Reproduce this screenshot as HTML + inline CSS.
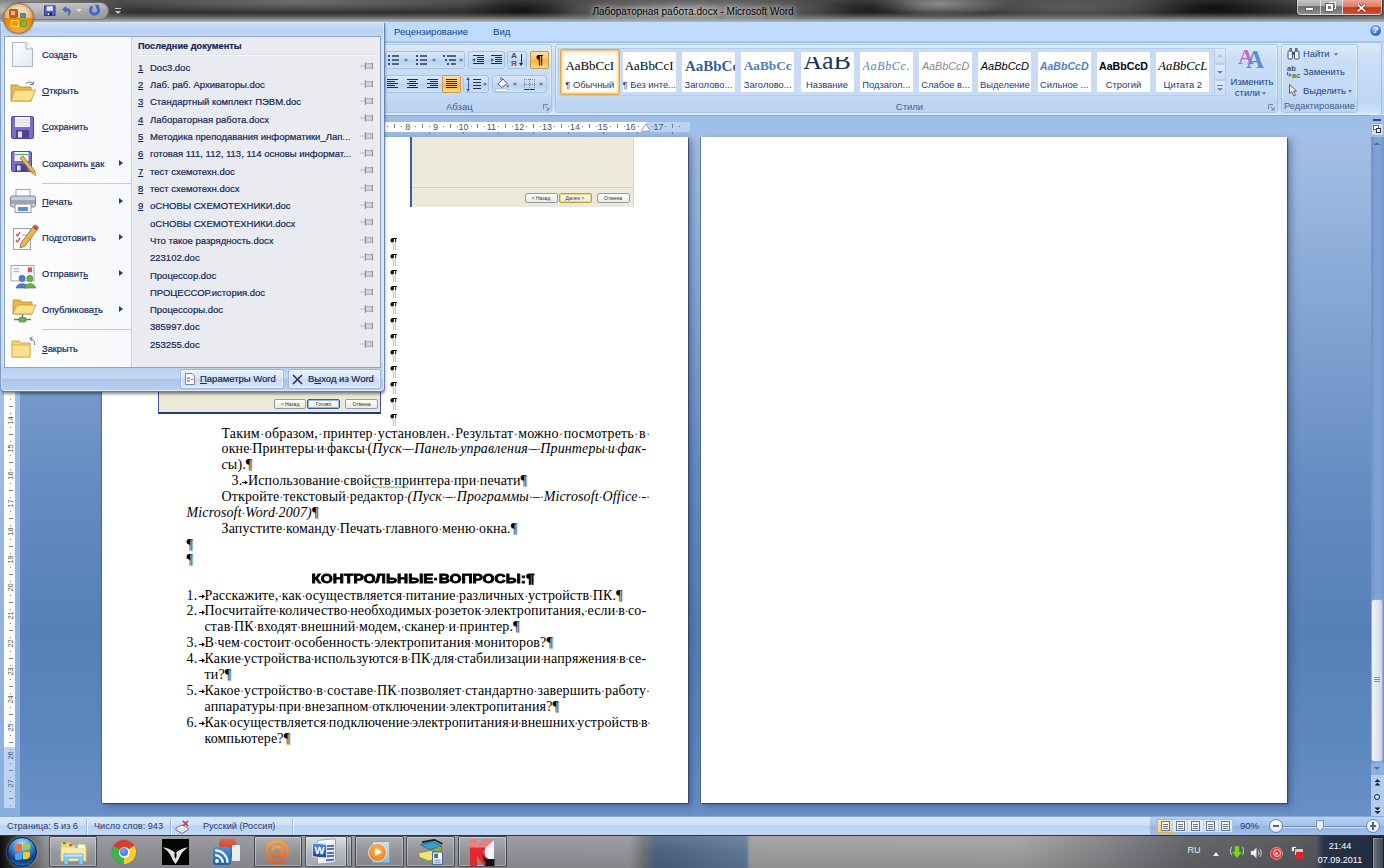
<!DOCTYPE html>
<html lang="ru"><head><meta charset="utf-8"><title>Лабораторная работа.docx - Microsoft Word</title>
<style>
html,body{margin:0;padding:0}
body{width:1384px;height:868px;overflow:hidden;position:relative;background:#7fa3d3;
 font-family:"Liberation Sans",sans-serif;font-size:11px;color:#15428b}
.abs,#root *{position:absolute;box-sizing:border-box}
#root{position:absolute;left:0;top:0;width:1384px;height:868px;overflow:hidden}
.t{white-space:nowrap;line-height:14px;height:14px}
.ui{font-family:"Liberation Sans",sans-serif;font-size:9.5px;color:#15428b}
#root u{position:static;text-decoration:underline}
#root span.s,#root i,#root b{position:static}
/* title bar */
#title{left:0;top:0;width:1384px;height:22px;background:
 linear-gradient(rgba(0,0,0,0) 0,rgba(0,0,0,0) 58%,rgba(150,150,150,.55) 80%,rgba(176,176,176,.95) 96%,rgba(180,180,180,1) 100%),
 radial-gradient(ellipse 120px 22px at 10px 10px,rgba(200,200,200,.95),rgba(150,150,150,.5) 60%,rgba(120,120,120,0) 100%),
 radial-gradient(ellipse 210px 11px at 300px 2px,rgba(135,135,135,.6),rgba(100,100,100,0) 100%),
 radial-gradient(ellipse 60px 16px at 520px 10px,rgba(10,10,10,.75),rgba(20,20,20,0) 100%),
 radial-gradient(ellipse 160px 19px at 693px 12px,rgba(185,185,185,.8),rgba(150,150,150,.4) 55%,rgba(120,120,120,0) 100%),
 radial-gradient(ellipse 50px 14px at 868px 9px,rgba(10,10,10,.5),rgba(20,20,20,0) 100%),
 radial-gradient(ellipse 70px 13px at 940px 4px,rgba(165,165,165,.75),rgba(120,120,120,0) 100%),
 radial-gradient(ellipse 120px 15px at 1070px 8px,rgba(120,120,120,.55),rgba(90,90,90,0) 100%),
 radial-gradient(ellipse 85px 17px at 1215px 8px,rgba(5,5,5,.8),rgba(20,20,20,0) 100%),
 radial-gradient(ellipse 60px 20px at 1384px 10px,rgba(130,130,130,.6),rgba(90,90,90,0) 100%),
 linear-gradient(#474747,#383838 40%,#2c2c2c 68%,#3a3a3a)}
#tabs{left:0;top:22px;width:1384px;height:19px;background:#bfdbff}
#ribbon{left:0;top:40.5px;width:1384px;height:74.5px;background:linear-gradient(#c3dbfa,#c9dff9 30%,#c0d8f8 75%,#bcd5f7)}
#belowrib{left:0;top:115px;width:1384px;height:22px;background:linear-gradient(#9dbde8,#a3c0e8)}
#docbg{left:0;top:137px;width:1384px;height:680px;background:linear-gradient(#a3bfe5 0%,#84a6d4 25%,#678dc2 50%,#5680b8 73%,#5e87bf 88%,#6990c7 100%)}
.page{background:#fff;box-shadow:-1px 0 0 rgba(60,85,130,.6),1px 1px 1px rgba(40,55,95,.7),4px 3px 7px rgba(45,65,110,.5)}
#status{left:0;top:816px;width:1384px;height:19px;background:linear-gradient(#d9e8fb,#cfe0f8 42%,#bbd2f2 50%,#c2d8f5 100%);border-top:1px solid #86a9da}


.grp{border:1px solid #a9c4e6;border-radius:3px;background:linear-gradient(#dbe8f8 0%,#cadef6 22%,#c3daf6 78%,#c3daf6 100%);box-shadow:inset 0 0 0 1px rgba(255,255,255,.45)}
.grplbl{left:0;right:0;bottom:0;height:14px;background:linear-gradient(#c0d7f3,#bbd3f1);border-radius:0 0 3px 3px;color:#41608f;text-align:center;line-height:17px;font-size:9.5px;overflow:hidden}
.btnset{border:1px solid #a7c2e4;border-radius:3px;background:linear-gradient(#d9e6f7,#c4d9f3 50%,#b9d1f0 51%,#cfe0f6);}
.btnhot{background:linear-gradient(#fde0a8,#fcc36b 45%,#fbb040 50%,#fdd98d);border:1px solid #c99a4c;border-radius:2px}
.sty{background:#fff;width:53px;height:40px;top:52px}
.stys{font-family:"Liberation Serif",serif;font-size:15px;line-height:18px;top:5px;left:0;width:53px;text-align:center;color:#000;white-space:nowrap;overflow:hidden;height:20px}
.styl{font-size:9.4px;line-height:13px;top:26px;left:0;width:53px;text-align:center;color:#1e3a78;white-space:nowrap;overflow:hidden}
.rul{font-size:9px;color:#46536f;line-height:11px;height:11px;text-align:center;width:14px}
.sb{color:#1f3b73;font-size:9.15px;line-height:14px;white-space:nowrap}


.dl{display:flex;justify-content:space-between;font-family:"Liberation Serif",serif;font-size:14px;line-height:16px;height:16px;color:#000;white-space:nowrap;letter-spacing:.14px}
.dl.nj{justify-content:flex-start}
#root .dl span{position:static;display:block;flex:0 0 auto}
#root .dl span.i{font-style:italic}
#root .dl span.d{color:#333;font-size:12px;width:3.5px;flex:0 1 3.5px;min-width:0;display:flex;justify-content:center;overflow:visible}
#root .dl span.nt{display:flex;justify-content:space-between;align-items:baseline}
#root .dl span.ar{font-size:9px;font-weight:bold;line-height:16px;letter-spacing:-1px;transform:translateY(-1px)}
#root .dl span.pm{text-shadow:1px 1px 0 #b8b8b8}
#root .dl span.tab{font-size:8px;width:0;overflow:visible;position:relative}
.pil{font-family:"Liberation Sans",sans-serif;font-weight:bold;font-size:15.4px;line-height:16px;height:18px;width:10px;color:transparent;background:linear-gradient(#0a0a0a 0,#0a0a0a 6.6px,#b9bdc3 7.6px,#b9bdc3 100%);-webkit-background-clip:text;background-clip:text;transform:scaleX(.86);transform-origin:0 0}
.xpbtn{border:1px solid #8c9bb8;border-radius:2px;background:linear-gradient(#fff,#ece9d8);font-size:5px;line-height:6px;color:#333;text-align:center;white-space:nowrap;overflow:hidden}


#menu{left:1px;top:22px;width:382.5px;height:369px;border:1px solid #dfeafa;border-left-color:#c5d9f3;border-top:none;border-radius:0 0 4px 4px;
 background:linear-gradient(#d3e3f8 0px,#c2d7f3 5px,#b8cfef 8px,#c4d9f5 14px,#cfe0f7 20px,#cfe0f7 340px,#c3d8f4 344px,#b9d0f0 346px,#c5daf5 356px,#a9c5ea 357px,#b8d0f0 368px);
 box-shadow:1px 1px 0 0 rgba(95,125,175,.8),-1px 1px 0 0 rgba(95,125,175,.5),1px 3px 3px 0 rgba(0,0,0,.45)}
.mi{font-size:9.3px;color:#15285a;-webkit-text-stroke:.2px #15285a;line-height:14px;height:14px;white-space:nowrap}
.md{font-size:9.5px;color:#15285a;-webkit-text-stroke:.2px #15285a;line-height:14px;height:14px;white-space:nowrap}
.marr{width:0;height:0;border-top:3.5px solid transparent;border-bottom:3.5px solid transparent;border-left:4px solid #2b3f63}
.mbtn{border:1px solid #9ab6dc;border-radius:3px;background:linear-gradient(#e9f1fc,#d5e4f8 50%,#c6daf5 51%,#d9e7fa);height:20px;box-shadow:inset 0 0 0 1px rgba(255,255,255,.7)}


#taskbar{left:0;top:835px;width:1384px;height:33px;background:
 linear-gradient(90deg,rgba(0,0,0,.9) 0px,rgba(10,10,10,.75) 10px,rgba(40,40,40,0) 46px),
 linear-gradient(90deg,rgba(45,47,52,0) 0px,rgba(45,47,52,0) 1020px,rgba(45,47,52,.22) 1100px,rgba(45,47,52,.5) 1185px,rgba(42,44,50,.6) 1316px,rgba(30,42,64,.92) 1324px,rgba(27,37,57,.94) 1384px),
 linear-gradient(rgba(255,255,255,.12),rgba(255,255,255,0) 50%,rgba(0,0,0,.08)),
 linear-gradient(90deg,#808285 0px,#8c8e91 60px,#909296 630px,#6a7078 644px,#4b5f7e 656px,#5e7795 746px,#9a9b9d 750px,#9c9d9f 1000px,#8f9092 1384px);
 border-top:1px solid #30343a}
.tbtn{top:0px;height:31px;border:1px solid rgba(50,55,62,.8);border-radius:2px;background:linear-gradient(rgba(190,192,196,.5),rgba(150,153,158,.3) 50%,rgba(125,128,133,.35));box-shadow:inset 0 0 0 1px rgba(235,237,240,.4)}
.tray{color:#fff;font-size:10px;line-height:12px;height:12px;white-space:nowrap;text-align:center}
</style></head>
<body><div id="root">
<div id="title">
<div style="left:18px;top:2px;width:91px;height:18px;border-radius:0 9px 9px 0;background:linear-gradient(rgba(215,215,215,.8),rgba(165,165,165,.75));border:1px solid rgba(90,90,90,.7)"></div>
<svg style="left:44px;top:5px" width="11.5" height="11.5" viewBox="0 0 13 12"><rect x="0.5" y="0.5" width="12" height="11" fill="#5d5fc4" stroke="#34389a"/><rect x="3" y="1" width="7" height="5" fill="#e8ecff"/><rect x="3" y="8" width="6" height="3.5" fill="#1c1f5a"/><rect x="4" y="8.6" width="2" height="2.4" fill="#dfe3ff"/></svg>
<svg style="left:61px;top:5px" width="12" height="12" viewBox="0 0 12 12"><path d="M1.5 4.5 L5 1.5 L5 3.5 C9 3 10.5 6 8.5 9.5 L7 10.5 C8.5 7.5 8 5.8 5 5.8 L5 7.5 Z" fill="#3f6fd0" stroke="#2853ad" stroke-width=".5"/></svg>
<div style="left:76px;top:9px;width:0;height:0;border-left:3px solid transparent;border-right:3px solid transparent;border-top:3px solid #dfe3ec"></div>
<svg style="left:88px;top:4px" width="13" height="13" viewBox="0 0 13 13"><path d="M9.3 3 A4.1 4.1 0 1 1 3.6 3.2" fill="none" stroke="#3a68cc" stroke-width="2.8" stroke-linecap="round"/><path d="M7 0.3 L11.4 1.4 L8.8 5.2 Z" fill="#3a68cc"/></svg>
<div style="left:115px;top:8px;width:6px;height:1px;background:#b9c3d8"></div><div style="left:115px;top:11px;width:0;height:0;border-left:3px solid transparent;border-right:3px solid transparent;border-top:3px solid #b9c3d8"></div>
<div class="t" style="left:493px;top:4.5px;width:400px;text-align:center;color:#000;font-size:10px;text-shadow:0 0 5px rgba(255,255,255,.9),0 0 8px rgba(255,255,255,.7)">Лабораторная работа.docx - Microsoft Word</div>
<div style="left:1297px;top:-3px;width:85px;height:18px;border-radius:0 0 4px 4px;border:1px solid rgba(225,225,225,.7);background:linear-gradient(#d0d0d0,#a8a8a8 50%,#6e6e6e 54%,#8a8a8a);overflow:hidden;box-shadow:0 0 0 1px rgba(40,40,40,.6)"><div style="left:22px;top:0;width:1px;height:18px;background:rgba(235,235,235,.75)"></div><div style="left:44px;top:0;width:1px;height:18px;background:rgba(235,235,235,.75)"></div><div style="left:45px;top:0;width:39px;height:18px;background:linear-gradient(#f0b4a6,#e07a64 48%,#c8351a 54%,#d8563a)"></div><div style="left:7px;top:9px;width:9px;height:4px;background:#fff;border:1px solid #666"></div><div style="left:31px;top:4px;width:7px;height:7px;border:1.5px solid #eee;background:rgba(120,120,120,.6)"></div><div style="left:28px;top:6px;width:7px;height:7px;border:2px solid #fff;background:#777;outline:1px solid #666"></div><svg style="left:59px;top:6px" width="9" height="8" viewBox="0 0 11 10"><path d="M1.5 1.5 L9.5 8.5 M9.5 1.5 L1.5 8.5" stroke="#6a1a10" stroke-width="3.6" stroke-linecap="square"/><path d="M1.5 1.5 L9.5 8.5 M9.5 1.5 L1.5 8.5" stroke="#fff" stroke-width="2.2" stroke-linecap="square"/></svg></div>
</div>
<div id="tabs">
<div class="t ui" style="left:394px;top:3px;font-size:9.6px">Рецензирование</div>
<div class="t ui" style="left:493px;top:3px;font-size:9.6px">Вид</div>
<div style="left:1369px;top:2px;width:13px;height:13px;border-radius:7px;background:radial-gradient(circle at 40% 30%,#9cc4ff,#2a63c9 70%);border:1px solid #dbe9ff;color:#fff;font-size:9px;font-weight:bold;font-style:italic;line-height:11px;text-align:center">?</div>
</div>
<div id="ribbon">
<div style="left:0;top:0;width:1384px;height:1px;background:#a9c6ee"></div>
<div style="left:2px;top:1px;width:1380px;height:73px;border:1px solid #9ebfe8;border-radius:3px;background:linear-gradient(#dce9f9,#cadef7 22%,#bed7f7 80%,#c9e0fa 96%,#d8ecfc 100%)"></div>
</div>
<div class="grp" style="left:300px;top:44px;width:252px;height:69px"><div class="grplbl"><span class="s" style="position:absolute;left:145px">Абзац</span></div><svg style="left:242px;top:59px" width="7" height="7" viewBox="0 0 7 7"><path d="M0.5 5 V0.5 H5" fill="none" stroke="#6d87ad"/><path d="M2.5 2.5 L6 6 M6 3.5 V6 H3.5" fill="none" stroke="#6d87ad"/></svg></div>
<div class="btnset" style="left:384.5px;top:51px;width:80.5px;height:18px"></div>
<div class="btnset" style="left:468px;top:51px;width:37px;height:18px"></div>
<div class="btnset" style="left:507px;top:51px;width:20px;height:18px"></div>
<div class="btnhot" style="left:530px;top:51px;width:19px;height:18px"></div>
<div class="t" style="left:530px;top:52px;width:19px;text-align:center;font-size:13px;font-weight:bold;color:#000;line-height:16px">¶</div>
<div class="btnset" style="left:384.5px;top:75px;width:76.5px;height:18px"></div>
<div class="btnhot" style="left:442px;top:75px;width:19px;height:18px"></div>
<div class="btnset" style="left:463px;top:75px;width:26px;height:18px"></div>
<div class="btnset" style="left:492px;top:75px;width:55px;height:18px"></div>
<div style="left:388px;top:55px;width:2px;height:2px;background:#2d4f8e"></div>
<div style="left:392px;top:55px;width:7px;height:2px;background:#55637d"></div>
<div style="left:388px;top:59px;width:2px;height:2px;background:#2d4f8e"></div>
<div style="left:392px;top:59px;width:7px;height:2px;background:#55637d"></div>
<div style="left:388px;top:63px;width:2px;height:2px;background:#2d4f8e"></div>
<div style="left:392px;top:63px;width:7px;height:2px;background:#55637d"></div>
<div style="left:404px;top:59px;width:0;height:0;border-left:2px solid transparent;border-right:2px solid transparent;border-top:3px solid #6b7c9a"></div>
<div style="left:416px;top:55px;width:2px;height:2px;background:#2d4f8e"></div>
<div style="left:420px;top:55px;width:7px;height:2px;background:#55637d"></div>
<div style="left:416px;top:59px;width:2px;height:2px;background:#2d4f8e"></div>
<div style="left:420px;top:59px;width:7px;height:2px;background:#55637d"></div>
<div style="left:416px;top:63px;width:2px;height:2px;background:#2d4f8e"></div>
<div style="left:420px;top:63px;width:7px;height:2px;background:#55637d"></div>
<div style="left:432px;top:59px;width:0;height:0;border-left:2px solid transparent;border-right:2px solid transparent;border-top:3px solid #6b7c9a"></div>
<div style="left:443px;top:55px;width:2px;height:2px;background:#2d4f8e"></div>
<div style="left:447px;top:55px;width:9px;height:2px;background:#55637d"></div>
<div style="left:445px;top:59px;width:2px;height:2px;background:#2d4f8e"></div>
<div style="left:449px;top:59px;width:7px;height:2px;background:#55637d"></div>
<div style="left:447px;top:63px;width:2px;height:2px;background:#2d4f8e"></div>
<div style="left:451px;top:63px;width:5px;height:2px;background:#55637d"></div>
<div style="left:459px;top:59px;width:0;height:0;border-left:2px solid transparent;border-right:2px solid transparent;border-top:3px solid #6b7c9a"></div>
<div style="left:473px;top:55px;width:11px;height:1px;background:#1f2d45"></div>
<div style="left:477px;top:57px;width:7px;height:1px;background:#1f2d45"></div>
<div style="left:477px;top:59px;width:7px;height:1px;background:#1f2d45"></div>
<div style="left:477px;top:61px;width:7px;height:1px;background:#1f2d45"></div>
<div style="left:473px;top:63px;width:11px;height:1px;background:#1f2d45"></div>
<div style="left:491px;top:55px;width:11px;height:1px;background:#1f2d45"></div>
<div style="left:495px;top:57px;width:7px;height:1px;background:#1f2d45"></div>
<div style="left:495px;top:59px;width:7px;height:1px;background:#1f2d45"></div>
<div style="left:495px;top:61px;width:7px;height:1px;background:#1f2d45"></div>
<div style="left:491px;top:63px;width:11px;height:1px;background:#1f2d45"></div>
<div style="left:472px;top:58px;width:0;height:0;border-top:2px solid transparent;border-bottom:2px solid transparent;border-right:3px solid #2f62c8"></div>
<div style="left:491px;top:58px;width:0;height:0;border-top:2px solid transparent;border-bottom:2px solid transparent;border-left:3px solid #2f62c8"></div>
<div class="t" style="left:511px;top:52px;font-size:8px;line-height:8px;height:8px;font-weight:bold;color:#2d4f8e">А</div>
<div class="t" style="left:511px;top:60px;font-size:8px;line-height:8px;height:8px;font-weight:bold;color:#b23a3a">Я</div>
<div style="left:521px;top:54px;width:1px;height:10px;background:#1f2d45"></div><div style="left:519px;top:63px;width:0;height:0;border-left:2.5px solid transparent;border-right:2.5px solid transparent;border-top:3px solid #1f2d45"></div>
<div style="left:387px;top:79px;width:11px;height:1px;background:#1f2d45"></div><div style="left:387px;top:81px;width:8px;height:1px;background:#1f2d45"></div><div style="left:387px;top:83px;width:11px;height:1px;background:#1f2d45"></div><div style="left:387px;top:85px;width:8px;height:1px;background:#1f2d45"></div><div style="left:387px;top:87px;width:11px;height:1px;background:#1f2d45"></div>
<div style="left:407px;top:79px;width:11px;height:1px;background:#1f2d45"></div><div style="left:409px;top:81px;width:7px;height:1px;background:#1f2d45"></div><div style="left:407px;top:83px;width:11px;height:1px;background:#1f2d45"></div><div style="left:409px;top:85px;width:7px;height:1px;background:#1f2d45"></div><div style="left:407px;top:87px;width:11px;height:1px;background:#1f2d45"></div>
<div style="left:427px;top:79px;width:11px;height:1px;background:#1f2d45"></div><div style="left:430px;top:81px;width:8px;height:1px;background:#1f2d45"></div><div style="left:427px;top:83px;width:11px;height:1px;background:#1f2d45"></div><div style="left:430px;top:85px;width:8px;height:1px;background:#1f2d45"></div><div style="left:427px;top:87px;width:11px;height:1px;background:#1f2d45"></div>
<div style="left:446px;top:79px;width:11px;height:1px;background:#1f2d45"></div><div style="left:446px;top:81px;width:11px;height:1px;background:#1f2d45"></div><div style="left:446px;top:83px;width:11px;height:1px;background:#1f2d45"></div><div style="left:446px;top:85px;width:11px;height:1px;background:#1f2d45"></div><div style="left:446px;top:87px;width:11px;height:1px;background:#1f2d45"></div>
<div style="left:468px;top:78px;width:1px;height:12px;background:#2f62c8"></div><div style="left:466px;top:77px;width:0;height:0;border-left:2.5px solid transparent;border-right:2.5px solid transparent;border-bottom:3px solid #2f62c8"></div><div style="left:466px;top:89px;width:0;height:0;border-left:2.5px solid transparent;border-right:2.5px solid transparent;border-top:3px solid #2f62c8"></div>
<div style="left:473px;top:79px;width:8px;height:1px;background:#1f2d45"></div>
<div style="left:473px;top:82px;width:8px;height:1px;background:#1f2d45"></div>
<div style="left:473px;top:85px;width:8px;height:1px;background:#1f2d45"></div>
<div style="left:473px;top:88px;width:8px;height:1px;background:#1f2d45"></div>
<div style="left:483px;top:83px;width:0;height:0;border-left:2px solid transparent;border-right:2px solid transparent;border-top:3px solid #6b7c9a"></div>
<svg style="left:495px;top:77px" width="16" height="15" viewBox="0 0 16 15"><path d="M3 7 L8 2 L12 6.5 L7 10.5 Z" fill="#f4f6fb" stroke="#59647c"/><path d="M8 2 C6 -0.5 4.5 1 6.5 3.5" fill="none" stroke="#59647c"/><path d="M12.5 7 C14 9 14 10.5 12.8 10.5 C11.6 10.5 11.6 9 12.5 7Z" fill="#3e78d6"/><rect x="0.5" y="12" width="12" height="2.5" fill="#fff" stroke="#9aa8bf" stroke-width=".6"/></svg>
<div style="left:513px;top:83px;width:0;height:0;border-left:2px solid transparent;border-right:2px solid transparent;border-top:3px solid #6b7c9a"></div>
<div style="left:524px;top:79px;width:11px;height:11px;border:1px dotted #7d8aa3;border-bottom:1px solid #1f2d45"></div><div style="left:529px;top:79px;width:1px;height:11px;border-left:1px dotted #7d8aa3"></div><div style="left:524px;top:84px;width:11px;height:1px;border-top:1px dotted #7d8aa3"></div>
<div style="left:539px;top:83px;width:0;height:0;border-left:2px solid transparent;border-right:2px solid transparent;border-top:3px solid #6b7c9a"></div>
<div class="grp" style="left:555px;top:44px;width:723px;height:69px"><div class="grplbl" style="padding-right:14px">Стили</div><svg style="left:712px;top:59px" width="7" height="7" viewBox="0 0 7 7"><path d="M0.5 5 V0.5 H5" fill="none" stroke="#6d87ad"/><path d="M2.5 2.5 L6 6 M6 3.5 V6 H3.5" fill="none" stroke="#6d87ad"/></svg></div>
<div style="left:558px;top:48px;width:668px;height:48px;border:1px solid #b5cdeb;background:#c8dcf5"></div>
<div style="left:560px;top:49px;width:60px;height:46px;border:1px solid #e0a84a;border-radius:2px;background:#fff;box-shadow:inset 0 0 4px 1px #fbcf7f, inset 0 0 1px 1px #f6b85a"></div>
<div class="sty" style="left:563.3px;background:transparent;"><div class="stys" style="font-size:12.9px;">AaBbCcI</div><div class="styl">¶ Обычный</div></div>
<div class="sty" style="left:622.6px;"><div class="stys" style="font-size:12.9px;">AaBbCcI</div><div class="styl">¶ Без инте...</div></div>
<div class="sty" style="left:681.9px;"><div class="stys" style="font-size:15px;font-weight:bold;color:#365f91;text-align:left;padding-left:3px;">AaBbCc</div><div class="styl">Заголово...</div></div>
<div class="sty" style="left:741.2px;"><div class="stys" style="font-size:13.3px;font-weight:bold;color:#4f81bd;">AaBbCc</div><div class="styl">Заголово...</div></div>
<div class="sty" style="left:800.5px;"><div class="stys" style="font-size:26px;color:#17365d;line-height:8px;">AaB</div><div class="styl">Название</div></div>
<div class="sty" style="left:859.8px;"><div class="stys" style="font-size:12px;font-style:italic;color:#4f81bd;letter-spacing:.64px;">AaBbCc.</div><div class="styl">Подзагол...</div></div>
<div class="sty" style="left:919.1px;"><div class="stys" style="font-size:10.8px;font-style:italic;color:#8a8a8a;font-family:'Liberation Sans',sans-serif;">AaBbCcD</div><div class="styl">Слабое в...</div></div>
<div class="sty" style="left:978.4px;"><div class="stys" style="font-size:11px;font-style:italic;color:#000;font-family:'Liberation Sans',sans-serif;">AaBbCcD</div><div class="styl">Выделение</div></div>
<div class="sty" style="left:1037.7px;"><div class="stys" style="font-size:10.6px;font-style:italic;font-weight:bold;color:#4f81bd;font-family:'Liberation Sans',sans-serif;">AaBbCcD</div><div class="styl">Сильное ...</div></div>
<div class="sty" style="left:1097.0px;"><div class="stys" style="font-size:10.6px;font-weight:bold;color:#000;font-family:'Liberation Sans',sans-serif;">AaBbCcD</div><div class="styl">Строгий</div></div>
<div class="sty" style="left:1156.3px;"><div class="stys" style="font-size:12.6px;font-style:italic;color:#000;">AaBbCcL</div><div class="styl">Цитата 2</div></div>
<div style="left:1214px;top:48px;width:12px;height:16px;border:1px solid #b5cdeb;background:linear-gradient(#dfeaf8,#cadcf3)"></div>
<div style="left:1214px;top:64px;width:12px;height:16px;border:1px solid #b5cdeb;background:linear-gradient(#dfeaf8,#cadcf3)"></div>
<div style="left:1214px;top:80px;width:12px;height:16px;border:1px solid #b5cdeb;background:linear-gradient(#dfeaf8,#cadcf3)"></div>
<div style="left:1217px;top:54px;width:0;height:0;border-left:3px solid transparent;border-right:3px solid transparent;border-bottom:3px solid #b9c6da"></div>
<div style="left:1217px;top:71px;width:0;height:0;border-left:3px solid transparent;border-right:3px solid transparent;border-top:3px solid #6d87ad"></div>
<div style="left:1217px;top:85px;width:6px;height:1px;background:#6d87ad"></div><div style="left:1217px;top:88px;width:0;height:0;border-left:3px solid transparent;border-right:3px solid transparent;border-top:3px solid #6d87ad"></div>
<div class="t" style="left:1238px;top:43px;font-family:'Liberation Serif',serif;font-size:22px;line-height:28px;height:28px;color:#c05fb4;font-weight:bold;opacity:.9">A</div>
<div class="t" style="left:1246px;top:46px;font-family:'Liberation Serif',serif;font-size:25px;line-height:28px;height:28px;color:#5b8fd6;font-weight:bold">A</div>
<div class="t ui" style="left:1226px;top:75px;width:52px;text-align:center;font-size:9.5px">Изменить</div>
<div class="t ui" style="left:1226px;top:86px;width:43px;text-align:center;font-size:9.5px">стили</div>
<div style="left:1262px;top:92px;width:0;height:0;border-left:2.5px solid transparent;border-right:2.5px solid transparent;border-top:3px solid #6b7c9a"></div>
<div class="grp" style="left:1281px;top:44px;width:77px;height:69px"><div class="grplbl" style="font-size:9.3px">Редактирование</div></div>
<div class="t ui" style="left:1303px;top:47px;font-size:9.3px">Найти</div>
<div style="left:1334px;top:53px;width:0;height:0;border-left:2.5px solid transparent;border-right:2.5px solid transparent;border-top:3px solid #6b7c9a"></div>
<div class="t ui" style="left:1303px;top:65px;font-size:9.3px">Заменить</div>
<div class="t ui" style="left:1303px;top:84px;font-size:9.3px">Выделить</div>
<div style="left:1348px;top:90px;width:0;height:0;border-left:2.5px solid transparent;border-right:2.5px solid transparent;border-top:3px solid #6b7c9a"></div>
<svg style="left:1287px;top:47px" width="13" height="13" viewBox="0 0 13 13"><rect x="1" y="4" width="4.5" height="8" rx="1" fill="#f3f5fa" stroke="#44506b"/><rect x="7.5" y="4" width="4.5" height="8" rx="1" fill="#f3f5fa" stroke="#44506b"/><rect x="2.5" y="1" width="2.5" height="3.5" fill="#5d6a88"/><rect x="8" y="1" width="2.5" height="3.5" fill="#5d6a88"/><rect x="5" y="5" width="3" height="3" fill="#44506b"/></svg>
<div class="t" style="left:1287px;top:64.5px;font-size:7.5px;line-height:8px;height:8px;color:#44506b;font-weight:bold">ab</div><div class="t" style="left:1292px;top:71.5px;font-size:7.5px;line-height:8px;height:8px;color:#2d8a2d;font-weight:bold">ac</div><svg style="left:1286.5px;top:72px" width="5" height="5" viewBox="0 0 5 5"><path d="M0.6 0 V3 H4 M2.6 1.4 L4.2 3 L2.6 4.6" fill="none" stroke="#44506b" stroke-width=".9"/></svg>
<svg style="left:1289px;top:84px" width="9" height="13" viewBox="0 0 9 13"><path d="M0.5 0.5 L0.5 9.5 L2.8 7.5 L4.8 12 L6.5 11.2 L4.6 7 L7.5 7 Z" fill="#fff" stroke="#44506b" stroke-width=".9"/></svg>
<div id="belowrib">
<div style="left:0;top:-1.5px;width:1384px;height:1.5px;background:#d6ecfb"></div>
<div style="left:0;top:0;width:1384px;height:1.2px;background:#86a6d2"></div>
</div>
<div style="left:101px;top:121.5px;width:589px;height:10.5px;background:#bcd3f1"></div>
<div style="left:185px;top:121.5px;width:461px;height:10.5px;background:#fff"></div>
<div style="left:101px;top:132px;width:590px;height:5px;background:#9dbbe6"></div>
<div class="rul" style="left:400.8px;top:121.5px">8</div>
<div class="rul" style="left:428.6px;top:121.5px">9</div>
<div class="rul" style="left:456.5px;top:121.5px">10</div>
<div class="rul" style="left:484.4px;top:121.5px">11</div>
<div class="rul" style="left:512.2px;top:121.5px">12</div>
<div class="rul" style="left:540.0px;top:121.5px">13</div>
<div class="rul" style="left:567.9px;top:121.5px">14</div>
<div class="rul" style="left:595.8px;top:121.5px">15</div>
<div class="rul" style="left:623.6px;top:121.5px">16</div>
<div class="rul" style="left:651.5px;top:121.5px">17</div>
<div style="left:386.9px;top:126px;width:1px;height:1px;background:#6b7f9f"></div>
<div style="left:393.9px;top:124px;width:1px;height:4px;background:#6b7f9f"></div>
<div style="left:400.8px;top:126px;width:1px;height:1px;background:#6b7f9f"></div>
<div style="left:414.8px;top:126px;width:1px;height:1px;background:#6b7f9f"></div>
<div style="left:421.7px;top:124px;width:1px;height:4px;background:#6b7f9f"></div>
<div style="left:428.7px;top:126px;width:1px;height:1px;background:#6b7f9f"></div>
<div style="left:442.6px;top:126px;width:1px;height:1px;background:#6b7f9f"></div>
<div style="left:449.6px;top:124px;width:1px;height:4px;background:#6b7f9f"></div>
<div style="left:456.5px;top:126px;width:1px;height:1px;background:#6b7f9f"></div>
<div style="left:470.5px;top:126px;width:1px;height:1px;background:#6b7f9f"></div>
<div style="left:477.4px;top:124px;width:1px;height:4px;background:#6b7f9f"></div>
<div style="left:484.4px;top:126px;width:1px;height:1px;background:#6b7f9f"></div>
<div style="left:498.3px;top:126px;width:1px;height:1px;background:#6b7f9f"></div>
<div style="left:505.3px;top:124px;width:1px;height:4px;background:#6b7f9f"></div>
<div style="left:512.2px;top:126px;width:1px;height:1px;background:#6b7f9f"></div>
<div style="left:526.2px;top:126px;width:1px;height:1px;background:#6b7f9f"></div>
<div style="left:533.1px;top:124px;width:1px;height:4px;background:#6b7f9f"></div>
<div style="left:540.1px;top:126px;width:1px;height:1px;background:#6b7f9f"></div>
<div style="left:554.0px;top:126px;width:1px;height:1px;background:#6b7f9f"></div>
<div style="left:561.0px;top:124px;width:1px;height:4px;background:#6b7f9f"></div>
<div style="left:567.9px;top:126px;width:1px;height:1px;background:#6b7f9f"></div>
<div style="left:581.9px;top:126px;width:1px;height:1px;background:#6b7f9f"></div>
<div style="left:588.8px;top:124px;width:1px;height:4px;background:#6b7f9f"></div>
<div style="left:595.8px;top:126px;width:1px;height:1px;background:#6b7f9f"></div>
<div style="left:609.7px;top:126px;width:1px;height:1px;background:#6b7f9f"></div>
<div style="left:616.7px;top:124px;width:1px;height:4px;background:#6b7f9f"></div>
<div style="left:623.6px;top:126px;width:1px;height:1px;background:#6b7f9f"></div>
<div style="left:637.6px;top:126px;width:1px;height:1px;background:#6b7f9f"></div>
<div style="left:644.5px;top:124px;width:1px;height:4px;background:#6b7f9f"></div>
<div style="left:651.5px;top:126px;width:1px;height:1px;background:#6b7f9f"></div>
<div style="left:665.4px;top:126px;width:1px;height:1px;background:#6b7f9f"></div>
<div style="left:672.4px;top:124px;width:1px;height:4px;background:#6b7f9f"></div>
<div style="left:679.3px;top:126px;width:1px;height:1px;background:#6b7f9f"></div>
<div style="left:428.6px;top:132px;width:1px;height:2px;background:#6b83a8"></div>
<div style="left:463.4px;top:132px;width:1px;height:2px;background:#6b83a8"></div>
<div style="left:498.2px;top:132px;width:1px;height:2px;background:#6b83a8"></div>
<div style="left:533.0px;top:132px;width:1px;height:2px;background:#6b83a8"></div>
<div style="left:567.8px;top:132px;width:1px;height:2px;background:#6b83a8"></div>
<div style="left:602.6px;top:132px;width:1px;height:2px;background:#6b83a8"></div>
<div style="left:637.4px;top:132px;width:1px;height:2px;background:#6b83a8"></div>
<div style="left:672.2px;top:132px;width:1px;height:2px;background:#6b83a8"></div>
<svg style="left:641px;top:123px" width="9.5" height="9" viewBox="0 0 11 10"><path d="M5.5 1 L10 7.5 V9.5 H1 V7.5 Z" fill="#f4f7fc" stroke="#7f8fa8"/></svg>
<div id="docbg"></div>
<div style="left:0;top:137px;width:20px;height:679px;background:linear-gradient(#c2d7f3,#9bb9e3 50%,#8aaedd)"></div>
<div style="left:4.2px;top:137px;width:11.3px;height:609.6px;background:#fff"></div>
<div style="left:4.2px;top:746.6px;width:11.3px;height:61px;background:#bdd4f2"></div>
<div style="left:10px;top:399.0px;width:1px;height:1px;background:#6b7f9f"></div>
<div style="left:8.5px;top:406.0px;width:4px;height:1px;background:#6b7f9f"></div>
<div style="left:10px;top:413.0px;width:1px;height:1px;background:#6b7f9f"></div>
<div class="rul" style="left:3.4px;top:414.5px;width:14px;transform:rotate(-90deg);font-size:7.5px;letter-spacing:-.3px">14</div>
<div style="left:10px;top:427.0px;width:1px;height:1px;background:#6b7f9f"></div>
<div style="left:8.5px;top:434.0px;width:4px;height:1px;background:#6b7f9f"></div>
<div style="left:10px;top:441.0px;width:1px;height:1px;background:#6b7f9f"></div>
<div class="rul" style="left:3.4px;top:442.5px;width:14px;transform:rotate(-90deg);font-size:7.5px;letter-spacing:-.3px">15</div>
<div style="left:10px;top:455.0px;width:1px;height:1px;background:#6b7f9f"></div>
<div style="left:8.5px;top:462.0px;width:4px;height:1px;background:#6b7f9f"></div>
<div style="left:10px;top:468.9px;width:1px;height:1px;background:#6b7f9f"></div>
<div class="rul" style="left:3.4px;top:470.4px;width:14px;transform:rotate(-90deg);font-size:7.5px;letter-spacing:-.3px">16</div>
<div style="left:10px;top:482.9px;width:1px;height:1px;background:#6b7f9f"></div>
<div style="left:8.5px;top:489.9px;width:4px;height:1px;background:#6b7f9f"></div>
<div style="left:10px;top:496.9px;width:1px;height:1px;background:#6b7f9f"></div>
<div class="rul" style="left:3.4px;top:498.4px;width:14px;transform:rotate(-90deg);font-size:7.5px;letter-spacing:-.3px">17</div>
<div style="left:10px;top:510.9px;width:1px;height:1px;background:#6b7f9f"></div>
<div style="left:8.5px;top:517.9px;width:4px;height:1px;background:#6b7f9f"></div>
<div style="left:10px;top:524.9px;width:1px;height:1px;background:#6b7f9f"></div>
<div class="rul" style="left:3.4px;top:526.4px;width:14px;transform:rotate(-90deg);font-size:7.5px;letter-spacing:-.3px">18</div>
<div style="left:10px;top:538.9px;width:1px;height:1px;background:#6b7f9f"></div>
<div style="left:8.5px;top:545.9px;width:4px;height:1px;background:#6b7f9f"></div>
<div style="left:10px;top:552.9px;width:1px;height:1px;background:#6b7f9f"></div>
<div class="rul" style="left:3.4px;top:554.4px;width:14px;transform:rotate(-90deg);font-size:7.5px;letter-spacing:-.3px">19</div>
<div style="left:10px;top:566.8px;width:1px;height:1px;background:#6b7f9f"></div>
<div style="left:8.5px;top:573.8px;width:4px;height:1px;background:#6b7f9f"></div>
<div style="left:10px;top:580.8px;width:1px;height:1px;background:#6b7f9f"></div>
<div class="rul" style="left:3.4px;top:582.3px;width:14px;transform:rotate(-90deg);font-size:7.5px;letter-spacing:-.3px">20</div>
<div style="left:10px;top:594.8px;width:1px;height:1px;background:#6b7f9f"></div>
<div style="left:8.5px;top:601.8px;width:4px;height:1px;background:#6b7f9f"></div>
<div style="left:10px;top:608.8px;width:1px;height:1px;background:#6b7f9f"></div>
<div class="rul" style="left:3.4px;top:610.3px;width:14px;transform:rotate(-90deg);font-size:7.5px;letter-spacing:-.3px">21</div>
<div style="left:10px;top:622.8px;width:1px;height:1px;background:#6b7f9f"></div>
<div style="left:8.5px;top:629.8px;width:4px;height:1px;background:#6b7f9f"></div>
<div style="left:10px;top:636.8px;width:1px;height:1px;background:#6b7f9f"></div>
<div class="rul" style="left:3.4px;top:638.3px;width:14px;transform:rotate(-90deg);font-size:7.5px;letter-spacing:-.3px">22</div>
<div style="left:10px;top:650.8px;width:1px;height:1px;background:#6b7f9f"></div>
<div style="left:8.5px;top:657.7px;width:4px;height:1px;background:#6b7f9f"></div>
<div style="left:10px;top:664.7px;width:1px;height:1px;background:#6b7f9f"></div>
<div class="rul" style="left:3.4px;top:666.2px;width:14px;transform:rotate(-90deg);font-size:7.5px;letter-spacing:-.3px">23</div>
<div style="left:10px;top:678.7px;width:1px;height:1px;background:#6b7f9f"></div>
<div style="left:8.5px;top:685.7px;width:4px;height:1px;background:#6b7f9f"></div>
<div style="left:10px;top:692.7px;width:1px;height:1px;background:#6b7f9f"></div>
<div class="rul" style="left:3.4px;top:694.2px;width:14px;transform:rotate(-90deg);font-size:7.5px;letter-spacing:-.3px">24</div>
<div style="left:10px;top:706.7px;width:1px;height:1px;background:#6b7f9f"></div>
<div style="left:8.5px;top:713.7px;width:4px;height:1px;background:#6b7f9f"></div>
<div style="left:10px;top:720.7px;width:1px;height:1px;background:#6b7f9f"></div>
<div class="rul" style="left:3.4px;top:722.2px;width:14px;transform:rotate(-90deg);font-size:7.5px;letter-spacing:-.3px">25</div>
<div style="left:10px;top:734.7px;width:1px;height:1px;background:#6b7f9f"></div>
<div style="left:8.5px;top:741.7px;width:4px;height:1px;background:#6b7f9f"></div>
<div style="left:10px;top:748.6px;width:1px;height:1px;background:#6b7f9f"></div>
<div class="rul" style="left:3.4px;top:750.1px;width:14px;transform:rotate(-90deg);font-size:7.5px;letter-spacing:-.3px">26</div>
<div style="left:10px;top:762.6px;width:1px;height:1px;background:#6b7f9f"></div>
<div style="left:8.5px;top:769.6px;width:4px;height:1px;background:#6b7f9f"></div>
<div style="left:10px;top:776.6px;width:1px;height:1px;background:#6b7f9f"></div>
<div class="rul" style="left:3.4px;top:778.1px;width:14px;transform:rotate(-90deg);font-size:7.5px;letter-spacing:-.3px">27</div>
<div style="left:10px;top:790.6px;width:1px;height:1px;background:#6b7f9f"></div>
<div style="left:8.5px;top:797.6px;width:4px;height:1px;background:#6b7f9f"></div>
<div style="left:10px;top:804.6px;width:1px;height:1px;background:#6b7f9f"></div>
<div style="left:1370px;top:115px;width:14px;height:22px;background:#9dbce6"></div>
<div style="left:1370.5px;top:137px;width:13.5px;height:638px;background:linear-gradient(90deg,#7092c6,#7fa1d3 35%,#83a4d5 60%,#7596ca)"></div>
<div style="left:1370.5px;top:775px;width:13.5px;height:42px;background:#b4ccef"></div>
<div style="left:1373px;top:119px;width:8px;height:1.6px;background:#2f4a80"></div>
<div style="left:1370.5px;top:122.5px;width:13.5px;height:13.5px;border:1px solid #9fb0cb;background:#d3dbe8"></div>
<div style="left:1373px;top:125px;width:6px;height:5px;background:#fff;border:1px solid #667"></div><div style="left:1376px;top:128px;width:5px;height:5px;background:#f2f2f2;border:1px solid #334"></div>
<div style="left:1373.5px;top:142px;width:0;height:0;border-left:3.5px solid transparent;border-right:3.5px solid transparent;border-bottom:3.5px solid #4f6b9d"></div>
<div style="left:1371px;top:599px;width:11.5px;height:162.5px;border:1px solid #9aaac6;border-radius:3px;background:linear-gradient(90deg,#f1f4fa,#e1e7f2 50%,#cdd6e7)"></div>
<div style="left:1374px;top:677px;width:6px;height:1px;background:#7f8fa8"></div>
<div style="left:1374px;top:679px;width:6px;height:1px;background:#7f8fa8"></div>
<div style="left:1374px;top:681px;width:6px;height:1px;background:#7f8fa8"></div>
<div style="left:1370.5px;top:763px;width:13.5px;height:12px;background:#8eaedd"></div>
<div style="left:1373.5px;top:767px;width:0;height:0;border-left:3.5px solid transparent;border-right:3.5px solid transparent;border-top:3.5px solid #4f6b9d"></div>
<svg style="left:1374px;top:779px" width="7" height="7" viewBox="0 0 7 7"><path d="M3.5 0 L6.5 3 H0.5 Z M3.5 3.5 L6.5 6.5 H0.5 Z" fill="#16233f"/></svg>
<div style="left:1374px;top:793.5px;width:6px;height:6px;border-radius:3px;border:1.2px solid #16233f;background:#d5dfee"></div>
<svg style="left:1374px;top:807px" width="7" height="7" viewBox="0 0 7 7"><path d="M3.5 7 L6.5 4 H0.5 Z M3.5 3.5 L6.5 0.5 H0.5 Z" fill="#16233f"/></svg>
<div id="status">
<div class="sb" style="left:7px;top:2px">Страница: 5 из 6</div>
<div style="left:86px;top:2px;width:1px;height:16px;background:#9db9e0"></div><div style="left:87px;top:2px;width:1px;height:16px;background:#eef4fc"></div>
<div class="sb" style="left:94px;top:2px">Число слов: 943</div>
<div style="left:170px;top:2px;width:1px;height:16px;background:#9db9e0"></div><div style="left:171px;top:2px;width:1px;height:16px;background:#eef4fc"></div>
<svg style="left:175px;top:3px" width="16" height="14" viewBox="0 0 16 14"><path d="M1 8 L7 5 L13 8 L7 12 Z" fill="#f3f5fa" stroke="#55637d" stroke-width=".8"/><path d="M1 8 V10 L7 13.5 L13 10 V8" fill="#dfe5f0" stroke="#55637d" stroke-width=".8"/><path d="M8 1 L13 6 M13 1 L8 6" stroke="#d03030" stroke-width="1.6"/></svg>
<div class="sb" style="left:203px;top:2px">Русский (Россия)</div>
<div style="left:291.5px;top:2px;width:1px;height:16px;background:#9db9e0"></div><div style="left:292.5px;top:2px;width:1px;height:16px;background:#eef4fc"></div>
<div style="left:1150px;top:0;width:234px;height:18px;background:linear-gradient(#b9d1f2,#a4c1ea 48%,#93b4e2 52%,#a3c0e9)"></div>
<div style="left:1156px;top:2px;width:77px;height:14px;border:1px solid #a6c0e4;background:linear-gradient(#e9f1fc,#d3e2f7)"></div>
<div style="left:1157px;top:2px;width:16px;height:14px;border:1px solid #e0b050;background:linear-gradient(#fde9b6,#fbcc6a)"></div>
<div style="left:1172.2px;top:3px;width:1px;height:12px;background:#b7cdeb"></div>
<div style="left:1187.4px;top:3px;width:1px;height:12px;background:#b7cdeb"></div>
<div style="left:1202.6px;top:3px;width:1px;height:12px;background:#b7cdeb"></div>
<div style="left:1217.8px;top:3px;width:1px;height:12px;background:#b7cdeb"></div>
<div style="left:1160.5px;top:4px;width:9px;height:10px;border:1px solid #6a7690;background:#f6f8fc"></div>
<div style="left:1162.5px;top:6.5px;width:5px;height:1px;background:#6a7690"></div>
<div style="left:1162.5px;top:8.5px;width:5px;height:1px;background:#6a7690"></div>
<div style="left:1162.5px;top:10.5px;width:5px;height:1px;background:#6a7690"></div>
<div style="left:1175.7px;top:4px;width:9px;height:10px;border:1px solid #6a7690;background:#f6f8fc"></div>
<div style="left:1177.7px;top:6.5px;width:5px;height:1px;background:#6a7690"></div>
<div style="left:1177.7px;top:8.5px;width:5px;height:1px;background:#6a7690"></div>
<div style="left:1177.7px;top:10.5px;width:5px;height:1px;background:#6a7690"></div>
<div style="left:1190.9px;top:4px;width:9px;height:10px;border:1px solid #6a7690;background:#f6f8fc"></div>
<div style="left:1192.9px;top:6.5px;width:5px;height:1px;background:#6a7690"></div>
<div style="left:1192.9px;top:8.5px;width:5px;height:1px;background:#6a7690"></div>
<div style="left:1192.9px;top:10.5px;width:5px;height:1px;background:#6a7690"></div>
<div style="left:1206.1px;top:4px;width:9px;height:10px;border:1px solid #6a7690;background:#f6f8fc"></div>
<div style="left:1208.1px;top:6.5px;width:5px;height:1px;background:#6a7690"></div>
<div style="left:1208.1px;top:8.5px;width:5px;height:1px;background:#6a7690"></div>
<div style="left:1208.1px;top:10.5px;width:5px;height:1px;background:#6a7690"></div>
<div style="left:1221.3px;top:4px;width:9px;height:10px;border:1px solid #6a7690;background:#f6f8fc"></div>
<div style="left:1223.3px;top:6.5px;width:5px;height:1px;background:#6a7690"></div>
<div style="left:1223.3px;top:8.5px;width:5px;height:1px;background:#6a7690"></div>
<div style="left:1223.3px;top:10.5px;width:5px;height:1px;background:#6a7690"></div>
<div class="sb" style="left:1240px;top:2px;font-size:9.5px">90%</div>
<div style="left:1276px;top:8.5px;width:96px;height:1px;background:#6f8bb8"></div><div style="left:1276px;top:9.5px;width:96px;height:1px;background:#dbe7f8"></div>
<div style="left:1269px;top:2px;width:14px;height:14px;border-radius:7px;border:1px solid #6f87ad;background:radial-gradient(circle at 50% 30%,#fff,#d5e2f4)"></div>
<div style="left:1273px;top:8px;width:6px;height:2px;background:#4d648c"></div>
<div style="left:1366px;top:2px;width:14px;height:14px;border-radius:7px;border:1px solid #6f87ad;background:radial-gradient(circle at 50% 30%,#fff,#d5e2f4)"></div>
<div style="left:1370px;top:8px;width:6px;height:2px;background:#4d648c"></div>
<div style="left:1372px;top:5px;width:2px;height:8px;background:#4d648c"></div>
<svg style="left:1316px;top:3px" width="8" height="12" viewBox="0 0 9 13"><path d="M0.5 0.5 H8.5 V8 L4.5 12 L0.5 8 Z" fill="#e8eef8" stroke="#6f7f9c"/></svg>
</div>
<div class="page" style="left:102px;top:137px;width:586px;height:666px"></div>
<div class="page" style="left:701px;top:137px;width:586px;height:666px"></div>
<div style="left:410px;top:137px;width:224px;height:70px;background:#ece9d8;border-left:2px solid #3c5f9c;border-right:1px solid #d9d6c6"><div style="left:0;top:50px;width:222px;height:1px;background:#d2cfbf"></div><div class="xpbtn" style="left:112.5px;top:56px;width:33px;height:10px;padding-top:1px">&lt; Назад</div><div class="xpbtn" style="left:146.5px;top:56px;width:33px;height:10px;padding-top:1px;border-color:#c79a3a;box-shadow:inset 0 0 0 1px #f3d48b">Далее &gt;</div><div class="xpbtn" style="left:184.5px;top:56px;width:33px;height:10px;padding-top:1px">Отмена</div></div>
<div style="left:158px;top:330px;width:223px;height:84px;background:#ece9d8;border:1px solid #3c4f9c;border-bottom:2px solid #26358a"><div class="xpbtn" style="left:115px;top:68px;width:32px;height:10px;padding-top:1px">&lt; Назад</div><div class="xpbtn" style="left:148px;top:68px;width:33px;height:10px;padding-top:1px;border-color:#3c5f9c;box-shadow:inset 0 0 0 1px #9bb6e8">Готово</div><div class="xpbtn" style="left:186px;top:68px;width:33px;height:10px;padding-top:1px">Отмена</div></div>
<div class="pil" style="left:390.3px;top:235px">¶</div>
<div class="pil" style="left:390.3px;top:251px">¶</div>
<div class="pil" style="left:390.3px;top:267px">¶</div>
<div class="pil" style="left:390.3px;top:283px">¶</div>
<div class="pil" style="left:390.3px;top:299px">¶</div>
<div class="pil" style="left:390.3px;top:315px">¶</div>
<div class="pil" style="left:390.3px;top:331px">¶</div>
<div class="pil" style="left:390.3px;top:347px">¶</div>
<div class="pil" style="left:390.3px;top:363px">¶</div>
<div class="pil" style="left:390.3px;top:379px">¶</div>
<div class="pil" style="left:390.3px;top:395px">¶</div>
<div class="pil" style="left:390.3px;top:411px">¶</div>
<div class="dl" style="left:221.5px;top:425.5px;width:428.5px"><span>Таким</span><span class="d">·</span><span>образом,</span><span class="d">·</span><span>принтер</span><span class="d">·</span><span>установлен.</span><span class="d">·</span><span>Результат</span><span class="d">·</span><span>можно</span><span class="d">·</span><span>посмотреть</span><span class="d">·</span><span>в</span><span class="d">·</span></div>
<div class="dl" style="left:221.5px;top:441.4px;width:424.79999999999995px"><span>окне</span><span class="d">·</span><span>Принтеры</span><span class="d">·</span><span>и</span><span class="d">·</span><span>факсы</span><span class="d">·</span><span>(<i>Пуск</i></span><span class="d">·</span><span><i>–</i></span><span class="d">·</span><span><i>Панель</i></span><span class="d">·</span><span><i>управления</i></span><span class="d">·</span><span><i>–</i></span><span class="d">·</span><span><i>Принтеры</i></span><span class="d">·</span><span><i>и</i></span><span class="d">·</span><span><i>фак-</i></span></div>
<div class="dl nj" style="left:221.5px;top:457.2px"><span><i>с</i>ы).<span class="pm" style="display:inline">¶</span></span></div>
<div class="dl nj" style="left:231.5px;top:473.1px"><span><span class="nt" style="display:inline-flex;width:16.5px">3.<svg style="position:static;display:inline-block;align-self:center;margin-top:2px" width="6" height="5" viewBox="0 0 6 5"><path d="M0 2.5 H4" stroke="#000" stroke-width="1"/><path d="M3 0.3 L6 2.5 L3 4.7 Z" fill="#000"/></svg></span>Использование</span><span class="d">·</span><span>свойств</span><span class="d">·</span><span>принтера</span><span class="d">·</span><span>при</span><span class="d">·</span><span>печати<span class="pm" style="display:inline">¶</span></span></div>
<div class="dl" style="left:221.5px;top:488.9px;width:428.5px"><span>Откройте</span><span class="d">·</span><span>текстовый</span><span class="d">·</span><span>редактор</span><span class="d">·</span><span><i>(Пуск</i></span><span class="d">·</span><span><i>–</i></span><span class="d">·</span><span><i>Программы</i></span><span class="d">·</span><span><i>–</i></span><span class="d">·</span><span><i>Microsoft</i></span><span class="d">·</span><span><i>Office</i></span><span class="d">·</span><span><i>-</i></span><span class="d">·</span></div>
<div class="dl nj" style="left:186.5px;top:504.7px"><span><i>Microsoft</i></span><span class="d">·</span><span><i>Word</i></span><span class="d">·</span><span><i>2007)</i><span class="pm" style="display:inline">¶</span></span></div>
<div class="dl nj" style="left:221.5px;top:520.6px"><span>Запустите</span><span class="d">·</span><span>команду</span><span class="d">·</span><span>Печать</span><span class="d">·</span><span>главного</span><span class="d">·</span><span>меню</span><span class="d">·</span><span>окна.<span class="pm" style="display:inline">¶</span></span></div>
<div class="dl nj" style="left:186.5px;top:536.5px"><span><span class="pm" style="display:inline">¶</span></span></div>
<div class="dl nj" style="left:186.5px;top:552.3px"><span><span class="pm" style="display:inline">¶</span></span></div>
<div class="t" style="left:260px;top:570.5px;width:326px;height:16px;line-height:16px;text-align:center;font-family:'Liberation Sans',sans-serif;font-weight:bold;font-size:13.4px;color:#000;-webkit-text-stroke:.8px #000;transform:scaleX(1.152)">КОНТРОЛЬНЫЕ·ВОПРОСЫ:¶</div>
<div class="dl nj" style="left:186.5px;top:587.5px"><span><span class="nt" style="display:inline-flex;width:18px">1.<svg style="position:static;display:inline-block;align-self:center;margin-top:2px" width="6" height="5" viewBox="0 0 6 5"><path d="M0 2.5 H4" stroke="#000" stroke-width="1"/><path d="M3 0.3 L6 2.5 L3 4.7 Z" fill="#000"/></svg></span>Расскажите,</span><span class="d">·</span><span>как</span><span class="d">·</span><span>осуществляется</span><span class="d">·</span><span>питание</span><span class="d">·</span><span>различных</span><span class="d">·</span><span>устройств</span><span class="d">·</span><span>ПК.<span class="pm" style="display:inline">¶</span></span></div>
<div class="dl" style="left:186.5px;top:603.4px;width:459.79999999999995px"><span><span class="nt" style="display:inline-flex;width:18px">2.<svg style="position:static;display:inline-block;align-self:center;margin-top:2px" width="6" height="5" viewBox="0 0 6 5"><path d="M0 2.5 H4" stroke="#000" stroke-width="1"/><path d="M3 0.3 L6 2.5 L3 4.7 Z" fill="#000"/></svg></span>Посчитайте</span><span class="d">·</span><span>количество</span><span class="d">·</span><span>необходимых</span><span class="d">·</span><span>розеток</span><span class="d">·</span><span>электропитания,</span><span class="d">·</span><span>если</span><span class="d">·</span><span>в</span><span class="d">·</span><span>со-</span></div>
<div class="dl nj" style="left:204.5px;top:619.3px"><span>став</span><span class="d">·</span><span>ПК</span><span class="d">·</span><span>входят</span><span class="d">·</span><span>внешний</span><span class="d">·</span><span>модем,</span><span class="d">·</span><span>сканер</span><span class="d">·</span><span>и</span><span class="d">·</span><span>принтер.<span class="pm" style="display:inline">¶</span></span></div>
<div class="dl nj" style="left:186.5px;top:635.2px"><span><span class="nt" style="display:inline-flex;width:18px">3.<svg style="position:static;display:inline-block;align-self:center;margin-top:2px" width="6" height="5" viewBox="0 0 6 5"><path d="M0 2.5 H4" stroke="#000" stroke-width="1"/><path d="M3 0.3 L6 2.5 L3 4.7 Z" fill="#000"/></svg></span>В</span><span class="d">·</span><span>чем</span><span class="d">·</span><span>состоит</span><span class="d">·</span><span>особенность</span><span class="d">·</span><span>электропитания</span><span class="d">·</span><span>мониторов?<span class="pm" style="display:inline">¶</span></span></div>
<div class="dl" style="left:186.5px;top:651.1px;width:459.79999999999995px"><span><span class="nt" style="display:inline-flex;width:18px">4.<svg style="position:static;display:inline-block;align-self:center;margin-top:2px" width="6" height="5" viewBox="0 0 6 5"><path d="M0 2.5 H4" stroke="#000" stroke-width="1"/><path d="M3 0.3 L6 2.5 L3 4.7 Z" fill="#000"/></svg></span>Какие</span><span class="d">·</span><span>устройства</span><span class="d">·</span><span>используются</span><span class="d">·</span><span>в</span><span class="d">·</span><span>ПК</span><span class="d">·</span><span>для</span><span class="d">·</span><span>стабилизации</span><span class="d">·</span><span>напряжения</span><span class="d">·</span><span>в</span><span class="d">·</span><span>се-</span></div>
<div class="dl nj" style="left:204.5px;top:667.0px"><span>ти?<span class="pm" style="display:inline">¶</span></span></div>
<div class="dl" style="left:186.5px;top:682.9px;width:463.5px"><span><span class="nt" style="display:inline-flex;width:18px">5.<svg style="position:static;display:inline-block;align-self:center;margin-top:2px" width="6" height="5" viewBox="0 0 6 5"><path d="M0 2.5 H4" stroke="#000" stroke-width="1"/><path d="M3 0.3 L6 2.5 L3 4.7 Z" fill="#000"/></svg></span>Какое</span><span class="d">·</span><span>устройство</span><span class="d">·</span><span>в</span><span class="d">·</span><span>составе</span><span class="d">·</span><span>ПК</span><span class="d">·</span><span>позволяет</span><span class="d">·</span><span>стандартно</span><span class="d">·</span><span>завершить</span><span class="d">·</span><span>работу</span><span class="d">·</span></div>
<div class="dl nj" style="left:204.5px;top:698.8px"><span>аппаратуры</span><span class="d">·</span><span>при</span><span class="d">·</span><span>внезапном</span><span class="d">·</span><span>отключении</span><span class="d">·</span><span>электропитания?<span class="pm" style="display:inline">¶</span></span></div>
<div class="dl" style="left:186.5px;top:714.7px;width:463.5px"><span><span class="nt" style="display:inline-flex;width:18px">6.<svg style="position:static;display:inline-block;align-self:center;margin-top:2px" width="6" height="5" viewBox="0 0 6 5"><path d="M0 2.5 H4" stroke="#000" stroke-width="1"/><path d="M3 0.3 L6 2.5 L3 4.7 Z" fill="#000"/></svg></span>Как</span><span class="d">·</span><span>осуществляется</span><span class="d">·</span><span>подключение</span><span class="d">·</span><span>электропитания</span><span class="d">·</span><span>и</span><span class="d">·</span><span>внешних</span><span class="d">·</span><span>устройств</span><span class="d">·</span><span>в</span><span class="d">·</span></div>
<div class="dl nj" style="left:204.5px;top:730.6px"><span>компьютере?<span class="pm" style="display:inline">¶</span></span></div>
<svg style="left:372px;top:486px" width="36" height="3" viewBox="0 0 36 3"><path d="M0 2 L2 0.5 L4 2 L6 0.5 L8 2 L10 0.5 L12 2 L14 0.5 L16 2 L18 0.5 L20 2 L22 0.5 L24 2 L26 0.5 L28 2 L30 0.5 L32 2 L34 0.5 L36 2" fill="none" stroke="#3a9a3a" stroke-width=".8"/></svg>
<div id="menu">
<div style="left:2px;top:14px;width:377px;height:332px;border:1px solid #8ea4c4;background:#fafbfd"></div>
<div style="left:3px;top:15px;width:126px;height:330px;background:linear-gradient(90deg,#fdfdfe,#f7f8fb)"></div>
<div style="left:129px;top:15px;width:1px;height:330px;background:#c9d2e0"></div>
<div style="left:130px;top:15px;width:248px;height:330px;background:#e9ebf1"></div>
<div class="md" style="left:136px;top:17px;font-weight:bold;font-size:9.2px;color:#15285a">Последние документы</div>
<div style="left:132px;top:32px;width:244px;height:1px;background:#dde1e9"></div><div style="left:132px;top:33px;width:244px;height:1px;background:#f5f7fa"></div>
<div class="md" style="left:136px;top:38.5px"><u>1</u></div>
<div class="md" style="left:148px;top:38.5px">Doc3.doc</div>
<svg style="left:358.3px;top:40.3px" width="14" height="8" viewBox="0 0 14 8"><path d="M0 4 H5" stroke="#b4b8c0" stroke-width=".9"/><path d="M6 1.5 H12 V6.5 H6 Z" fill="#d4d7dc" stroke="none"/><path d="M6 1.8 H12 M6 6.2 H12" stroke="#9da2ab" stroke-width=".9"/><path d="M5.4 0.3 V7.7" stroke="#8d929b" stroke-width="1.2"/><path d="M12.4 0.8 V7.2" stroke="#8d929b" stroke-width="1.1"/></svg>
<div class="md" style="left:136px;top:55.8px"><u>2</u></div>
<div class="md" style="left:148px;top:55.8px">Лаб. раб. Архиваторы.doc</div>
<svg style="left:358.3px;top:57.6px" width="14" height="8" viewBox="0 0 14 8"><path d="M0 4 H5" stroke="#b4b8c0" stroke-width=".9"/><path d="M6 1.5 H12 V6.5 H6 Z" fill="#d4d7dc" stroke="none"/><path d="M6 1.8 H12 M6 6.2 H12" stroke="#9da2ab" stroke-width=".9"/><path d="M5.4 0.3 V7.7" stroke="#8d929b" stroke-width="1.2"/><path d="M12.4 0.8 V7.2" stroke="#8d929b" stroke-width="1.1"/></svg>
<div class="md" style="left:136px;top:73.2px"><u>3</u></div>
<div class="md" style="left:148px;top:73.2px">Стандартный комплект ПЭВМ.doc</div>
<svg style="left:358.3px;top:75.0px" width="14" height="8" viewBox="0 0 14 8"><path d="M0 4 H5" stroke="#b4b8c0" stroke-width=".9"/><path d="M6 1.5 H12 V6.5 H6 Z" fill="#d4d7dc" stroke="none"/><path d="M6 1.8 H12 M6 6.2 H12" stroke="#9da2ab" stroke-width=".9"/><path d="M5.4 0.3 V7.7" stroke="#8d929b" stroke-width="1.2"/><path d="M12.4 0.8 V7.2" stroke="#8d929b" stroke-width="1.1"/></svg>
<div class="md" style="left:136px;top:90.5px"><u>4</u></div>
<div class="md" style="left:148px;top:90.5px">Лабораторная работа.docx</div>
<svg style="left:358.3px;top:92.3px" width="14" height="8" viewBox="0 0 14 8"><path d="M0 4 H5" stroke="#b4b8c0" stroke-width=".9"/><path d="M6 1.5 H12 V6.5 H6 Z" fill="#d4d7dc" stroke="none"/><path d="M6 1.8 H12 M6 6.2 H12" stroke="#9da2ab" stroke-width=".9"/><path d="M5.4 0.3 V7.7" stroke="#8d929b" stroke-width="1.2"/><path d="M12.4 0.8 V7.2" stroke="#8d929b" stroke-width="1.1"/></svg>
<div class="md" style="left:136px;top:107.8px"><u>5</u></div>
<div class="md" style="left:148px;top:107.8px">Методика преподавания информатики_Лап...</div>
<svg style="left:358.3px;top:109.6px" width="14" height="8" viewBox="0 0 14 8"><path d="M0 4 H5" stroke="#b4b8c0" stroke-width=".9"/><path d="M6 1.5 H12 V6.5 H6 Z" fill="#d4d7dc" stroke="none"/><path d="M6 1.8 H12 M6 6.2 H12" stroke="#9da2ab" stroke-width=".9"/><path d="M5.4 0.3 V7.7" stroke="#8d929b" stroke-width="1.2"/><path d="M12.4 0.8 V7.2" stroke="#8d929b" stroke-width="1.1"/></svg>
<div class="md" style="left:136px;top:125.1px"><u>6</u></div>
<div class="md" style="left:148px;top:125.1px">готовая 111, 112, 113, 114 основы информат...</div>
<svg style="left:358.3px;top:126.9px" width="14" height="8" viewBox="0 0 14 8"><path d="M0 4 H5" stroke="#b4b8c0" stroke-width=".9"/><path d="M6 1.5 H12 V6.5 H6 Z" fill="#d4d7dc" stroke="none"/><path d="M6 1.8 H12 M6 6.2 H12" stroke="#9da2ab" stroke-width=".9"/><path d="M5.4 0.3 V7.7" stroke="#8d929b" stroke-width="1.2"/><path d="M12.4 0.8 V7.2" stroke="#8d929b" stroke-width="1.1"/></svg>
<div class="md" style="left:136px;top:142.5px"><u>7</u></div>
<div class="md" style="left:148px;top:142.5px">тест схемотехн.doc</div>
<svg style="left:358.3px;top:144.3px" width="14" height="8" viewBox="0 0 14 8"><path d="M0 4 H5" stroke="#b4b8c0" stroke-width=".9"/><path d="M6 1.5 H12 V6.5 H6 Z" fill="#d4d7dc" stroke="none"/><path d="M6 1.8 H12 M6 6.2 H12" stroke="#9da2ab" stroke-width=".9"/><path d="M5.4 0.3 V7.7" stroke="#8d929b" stroke-width="1.2"/><path d="M12.4 0.8 V7.2" stroke="#8d929b" stroke-width="1.1"/></svg>
<div class="md" style="left:136px;top:159.8px"><u>8</u></div>
<div class="md" style="left:148px;top:159.8px">тест схемотехн.docx</div>
<svg style="left:358.3px;top:161.6px" width="14" height="8" viewBox="0 0 14 8"><path d="M0 4 H5" stroke="#b4b8c0" stroke-width=".9"/><path d="M6 1.5 H12 V6.5 H6 Z" fill="#d4d7dc" stroke="none"/><path d="M6 1.8 H12 M6 6.2 H12" stroke="#9da2ab" stroke-width=".9"/><path d="M5.4 0.3 V7.7" stroke="#8d929b" stroke-width="1.2"/><path d="M12.4 0.8 V7.2" stroke="#8d929b" stroke-width="1.1"/></svg>
<div class="md" style="left:136px;top:177.1px"><u>9</u></div>
<div class="md" style="left:148px;top:177.1px">оСНОВЫ СХЕМОТЕХНИКИ.doc</div>
<svg style="left:358.3px;top:178.9px" width="14" height="8" viewBox="0 0 14 8"><path d="M0 4 H5" stroke="#b4b8c0" stroke-width=".9"/><path d="M6 1.5 H12 V6.5 H6 Z" fill="#d4d7dc" stroke="none"/><path d="M6 1.8 H12 M6 6.2 H12" stroke="#9da2ab" stroke-width=".9"/><path d="M5.4 0.3 V7.7" stroke="#8d929b" stroke-width="1.2"/><path d="M12.4 0.8 V7.2" stroke="#8d929b" stroke-width="1.1"/></svg>
<div class="md" style="left:148px;top:194.5px">оСНОВЫ СХЕМОТЕХНИКИ.docx</div>
<svg style="left:358.3px;top:196.3px" width="14" height="8" viewBox="0 0 14 8"><path d="M0 4 H5" stroke="#b4b8c0" stroke-width=".9"/><path d="M6 1.5 H12 V6.5 H6 Z" fill="#d4d7dc" stroke="none"/><path d="M6 1.8 H12 M6 6.2 H12" stroke="#9da2ab" stroke-width=".9"/><path d="M5.4 0.3 V7.7" stroke="#8d929b" stroke-width="1.2"/><path d="M12.4 0.8 V7.2" stroke="#8d929b" stroke-width="1.1"/></svg>
<div class="md" style="left:148px;top:211.8px">Что такое разрядность.docx</div>
<svg style="left:358.3px;top:213.6px" width="14" height="8" viewBox="0 0 14 8"><path d="M0 4 H5" stroke="#b4b8c0" stroke-width=".9"/><path d="M6 1.5 H12 V6.5 H6 Z" fill="#d4d7dc" stroke="none"/><path d="M6 1.8 H12 M6 6.2 H12" stroke="#9da2ab" stroke-width=".9"/><path d="M5.4 0.3 V7.7" stroke="#8d929b" stroke-width="1.2"/><path d="M12.4 0.8 V7.2" stroke="#8d929b" stroke-width="1.1"/></svg>
<div class="md" style="left:148px;top:229.1px">223102.doc</div>
<svg style="left:358.3px;top:230.9px" width="14" height="8" viewBox="0 0 14 8"><path d="M0 4 H5" stroke="#b4b8c0" stroke-width=".9"/><path d="M6 1.5 H12 V6.5 H6 Z" fill="#d4d7dc" stroke="none"/><path d="M6 1.8 H12 M6 6.2 H12" stroke="#9da2ab" stroke-width=".9"/><path d="M5.4 0.3 V7.7" stroke="#8d929b" stroke-width="1.2"/><path d="M12.4 0.8 V7.2" stroke="#8d929b" stroke-width="1.1"/></svg>
<div class="md" style="left:148px;top:246.5px">Процессор.doc</div>
<svg style="left:358.3px;top:248.3px" width="14" height="8" viewBox="0 0 14 8"><path d="M0 4 H5" stroke="#b4b8c0" stroke-width=".9"/><path d="M6 1.5 H12 V6.5 H6 Z" fill="#d4d7dc" stroke="none"/><path d="M6 1.8 H12 M6 6.2 H12" stroke="#9da2ab" stroke-width=".9"/><path d="M5.4 0.3 V7.7" stroke="#8d929b" stroke-width="1.2"/><path d="M12.4 0.8 V7.2" stroke="#8d929b" stroke-width="1.1"/></svg>
<div class="md" style="left:148px;top:263.8px">ПРОЦЕССОР.история.doc</div>
<svg style="left:358.3px;top:265.6px" width="14" height="8" viewBox="0 0 14 8"><path d="M0 4 H5" stroke="#b4b8c0" stroke-width=".9"/><path d="M6 1.5 H12 V6.5 H6 Z" fill="#d4d7dc" stroke="none"/><path d="M6 1.8 H12 M6 6.2 H12" stroke="#9da2ab" stroke-width=".9"/><path d="M5.4 0.3 V7.7" stroke="#8d929b" stroke-width="1.2"/><path d="M12.4 0.8 V7.2" stroke="#8d929b" stroke-width="1.1"/></svg>
<div class="md" style="left:148px;top:281.1px">Процессоры.doc</div>
<svg style="left:358.3px;top:282.9px" width="14" height="8" viewBox="0 0 14 8"><path d="M0 4 H5" stroke="#b4b8c0" stroke-width=".9"/><path d="M6 1.5 H12 V6.5 H6 Z" fill="#d4d7dc" stroke="none"/><path d="M6 1.8 H12 M6 6.2 H12" stroke="#9da2ab" stroke-width=".9"/><path d="M5.4 0.3 V7.7" stroke="#8d929b" stroke-width="1.2"/><path d="M12.4 0.8 V7.2" stroke="#8d929b" stroke-width="1.1"/></svg>
<div class="md" style="left:148px;top:298.4px">385997.doc</div>
<svg style="left:358.3px;top:300.2px" width="14" height="8" viewBox="0 0 14 8"><path d="M0 4 H5" stroke="#b4b8c0" stroke-width=".9"/><path d="M6 1.5 H12 V6.5 H6 Z" fill="#d4d7dc" stroke="none"/><path d="M6 1.8 H12 M6 6.2 H12" stroke="#9da2ab" stroke-width=".9"/><path d="M5.4 0.3 V7.7" stroke="#8d929b" stroke-width="1.2"/><path d="M12.4 0.8 V7.2" stroke="#8d929b" stroke-width="1.1"/></svg>
<div class="md" style="left:148px;top:315.8px">253255.doc</div>
<svg style="left:358.3px;top:317.6px" width="14" height="8" viewBox="0 0 14 8"><path d="M0 4 H5" stroke="#b4b8c0" stroke-width=".9"/><path d="M6 1.5 H12 V6.5 H6 Z" fill="#d4d7dc" stroke="none"/><path d="M6 1.8 H12 M6 6.2 H12" stroke="#9da2ab" stroke-width=".9"/><path d="M5.4 0.3 V7.7" stroke="#8d929b" stroke-width="1.2"/><path d="M12.4 0.8 V7.2" stroke="#8d929b" stroke-width="1.1"/></svg>
<div class="mi" style="left:40px;top:25.5px">Созд<u>а</u>ть</div>
<div class="mi" style="left:40px;top:61.5px"><u>О</u>ткрыть</div>
<div class="mi" style="left:40px;top:97.5px"><u>С</u>охранить</div>
<div class="mi" style="left:40px;top:134.5px">Сохранить <u>к</u>ак</div>
<div class="marr" style="left:117px;top:138px"></div>
<div class="mi" style="left:40px;top:172.5px"><u>П</u>ечать</div>
<div class="marr" style="left:117px;top:176px"></div>
<div class="mi" style="left:40px;top:208.5px">Под<u>г</u>отовить</div>
<div class="marr" style="left:117px;top:212px"></div>
<div class="mi" style="left:40px;top:244.5px">Отправит<u>ь</u></div>
<div class="marr" style="left:117px;top:248px"></div>
<div class="mi" style="left:40px;top:280.5px">Опубликова<u>т</u>ь</div>
<div class="marr" style="left:117px;top:284px"></div>
<div class="mi" style="left:40px;top:319.5px"><u>З</u>акрыть</div>
<div style="left:40px;top:161px;width:89px;height:1px;background:#c5cbd6"></div>
<div style="left:40px;top:307px;width:89px;height:1px;background:#c5cbd6"></div>
<div class="mbtn" style="left:178px;top:347px;width:104px"></div>
<div class="mbtn" style="left:286px;top:347px;width:93px"></div>
<div class="mi" style="left:198px;top:350px;font-size:9.5px"><u>П</u>араметры Word</div>
<div class="mi" style="left:306px;top:350px;font-size:9.5px">В<u>ы</u>ход из Word</div>
<svg style="left:183px;top:351px" width="10" height="12" viewBox="0 0 10 12"><path d="M0.5 0.5 H7 L9.5 3 V11.5 H0.5 Z" fill="#fdfdfd" stroke="#7b8699"/><path d="M2 5 H5 M2 8 H5 M6 6.5 H8" stroke="#55607a"/></svg>
<svg style="left:290px;top:352px" width="11" height="11" viewBox="0 0 11 11"><path d="M1 1 L10 10 M10 1 L1 10" stroke="#2b2f3a" stroke-width="1.5"/></svg>
</div>
<svg style="left:12px;top:42px" width="21" height="25" viewBox="0 0 21 25"><defs><linearGradient id="gnew" x1="0" y1="0" x2="1" y2="1"><stop offset="0" stop-color="#fff"/><stop offset="1" stop-color="#e3e8f3"/></linearGradient></defs><path d="M0.5 0.5 H14 L20.5 7 V24.5 H0.5 Z" fill="url(#gnew)" stroke="#aab3c5"/><path d="M14 0.5 V7 H20.5" fill="#f3f5fa" stroke="#aab3c5"/></svg>
<svg style="left:10px;top:80px" width="26" height="22" viewBox="0 0 26 22"><path d="M1 21 V5 H8 L10 7 H21 V21 Z" fill="#e7b94e" stroke="#b98b2c" stroke-width=".8"/><path d="M1 21 L5 10 H25.5 L21 21 Z" fill="#fbe08a" stroke="#c49a36" stroke-width=".8"/><path d="M16 3.5 C19 1 22 2 23 4.5 M23 4.5 L23.5 1.5 M23 4.5 L20 4.5" fill="none" stroke="#5b6b88" stroke-width="1"/></svg>
<svg style="left:11px;top:116px" width="23" height="23" viewBox="0 0 23 23"><rect x="0.5" y="0.5" width="22" height="22" rx="1.5" fill="#7a6dc2" stroke="#554a9c"/><rect x="4" y="1" width="15" height="10" fill="#f4f5fb"/><path d="M5 4 H18 M5 6.5 H18 M5 9 H18" stroke="#c9cde0" stroke-width=".8"/><rect x="5" y="14" width="13" height="8.5" fill="#4d4390"/><rect x="7" y="15.5" width="4" height="6" fill="#e4e6f3"/></svg>
<svg style="left:11px;top:151px" width="26" height="26" viewBox="0 0 26 26"><rect x="0.5" y="0.5" width="20" height="20" rx="1.5" fill="#7a6dc2" stroke="#554a9c"/><rect x="3.5" y="1" width="14" height="9" fill="#f4f5fb"/><path d="M4 3.5 H17" stroke="#5aa35a" stroke-width="1.2"/><rect x="4.5" y="13" width="12" height="7.5" fill="#4d4390"/><rect x="6" y="14.5" width="3.5" height="5" fill="#e4e6f3"/><path d="M9 7 L12 5 L24 20 L21.5 22.5 Z" fill="#e7b94e" stroke="#8f6a22" stroke-width=".8"/><path d="M21.5 22.5 L24 20 L25 24.5 Z" fill="#f3d9b0" stroke="#8f6a22" stroke-width=".6"/></svg>
<svg style="left:10px;top:189px" width="26" height="24" viewBox="0 0 26 24"><rect x="6" y="0.5" width="14" height="8" fill="#fdfdfd" stroke="#9aa3b5"/><rect x="0.5" y="7" width="25" height="11" rx="2" fill="#c9ced8" stroke="#7d8698"/><rect x="1" y="11" width="24" height="4" fill="#9ea6b6"/><rect x="5" y="15" width="16" height="8.5" fill="#fdfdfd" stroke="#8d96a8"/><rect x="8" y="18" width="10" height="4" fill="#5b8fd6"/></svg>
<svg style="left:13px;top:224px" width="26" height="26" viewBox="0 0 26 26"><rect x="0.5" y="4.5" width="17" height="21" fill="#fbfcfe" stroke="#9aa3b5"/><path d="M3 10 L4.5 12 L7 8 M3 16 L4.5 18 L7 14" fill="none" stroke="#c0392b" stroke-width="1.2"/><path d="M9 11 H15 M9 17 H15" stroke="#9aa3b5"/><path d="M8 19 L20 3 L24 6 L12 22 L7 24 Z" fill="#e9b553" stroke="#8f6a22" stroke-width=".8"/><path d="M20 3 L22 0.8 L25.5 3.5 L24 6 Z" fill="#d9534f" stroke="#8f2a22" stroke-width=".6"/></svg>
<svg style="left:10px;top:265px" width="27" height="24" viewBox="0 0 27 25"><rect x="0.5" y="0.5" width="24" height="16" fill="#fbfcfe" stroke="#9aa3b5"/><path d="M3 4 H9 M3 7 H9" stroke="#9aa3b5"/><rect x="18" y="2.5" width="4.5" height="5" fill="#d9534f"/><circle cx="12" cy="14" r="3.2" fill="#4a7fd0" stroke="#2d559a" stroke-width=".6"/><path d="M6 24 C6 18 18 18 18 24 Z" fill="#4a7fd0" stroke="#2d559a" stroke-width=".6"/><circle cx="20" cy="14" r="3.2" fill="#6bb04a" stroke="#3f7a2a" stroke-width=".6"/><path d="M14.5 24 C14.5 18 26 18 26 24 Z" fill="#6bb04a" stroke="#3f7a2a" stroke-width=".6"/></svg>
<svg style="left:10px;top:298px" width="27" height="26" viewBox="0 0 27 26"><path d="M3 16 V2 H10 L12 4 H22 V16 Z" fill="#e7b94e" stroke="#b98b2c" stroke-width=".8"/><path d="M3 16 L7 7 H26 L22 16 Z" fill="#fbe08a" stroke="#c49a36" stroke-width=".8"/><path d="M12.5 16 V21 M4 21.5 H21" stroke="#6b7688" stroke-width="1.4"/><rect x="9" y="19.5" width="7" height="4.5" rx="1" fill="#6bb04a" stroke="#3f7a2a" stroke-width=".6"/></svg>
<svg style="left:11px;top:336px" width="25" height="22" viewBox="0 0 25 22"><path d="M1 21 V5 H8 L10 7 H19 V21 Z" fill="#f6d56f" stroke="#c49a36" stroke-width=".8"/><path d="M1 9 H19 V21 H1 Z" fill="#fbe08a" stroke="#c49a36" stroke-width=".6"/><path d="M23.5 9 C24 5 22 3 19 2.5 M19 2.5 L21.5 1 M19 2.5 L20.5 5" fill="none" stroke="#5b6b88" stroke-width="1"/></svg>
<div style="left:3px;top:3px;width:30.5px;height:30.5px;border-radius:16px;border:1px solid #a06c28;box-shadow:0 0 2px rgba(0,0,0,.45),inset 0 0 4px 1px rgba(170,100,20,.5);background:linear-gradient(#f6ead6 0%,#f0d6a6 30%,#ecc27a 47%,#e38f0c 50%,#ec9c14 70%,#f4b13a 88%,#f7c56a 100%)"></div>
<div style="left:9.2px;top:9px;width:9.2px;height:9.2px;border-radius:1.5px;background:#cf5a1c;border:1.5px solid #c2491a"><div style="left:1.2px;top:1.2px;width:3.6px;height:3.6px;background:#f0b48a"></div></div>
<div style="left:20.3px;top:13.1px;width:5.6px;height:5.2px;border-radius:1px;background:#4d94ad;border:1px solid #3d7f98"></div>
<div style="left:11.3px;top:20.3px;width:7.4px;height:7px;border:1.6px solid #f7d44a;background:#ee9a18"></div>
<div style="left:20px;top:20px;width:7.2px;height:7.2px;border-radius:1.5px;background:#86b236;border:1px solid #6f9a2a"><div style="left:1.5px;top:1.5px;width:2.4px;height:2.4px;border-radius:1.2px;background:#e0963a"></div></div>
<div id="taskbar">
<div style="left:7px;top:1px;width:30px;height:30px;border-radius:15px;background:radial-gradient(circle at 50% 22%,#bfe3f7 0%,#6fb2e0 22%,#2d6fb5 48%,#123d7e 66%,#1e8fd0 92%,#39c0f0 100%);border:1px solid #0b2347;box-shadow:0 0 3px rgba(140,200,255,.7)"></div>
<div style="left:15px;top:8px;width:7px;height:7px;border-radius:3px 1px 1px 1px;background:#f0743a;transform:skewY(-8deg)"></div>
<div style="left:23px;top:7px;width:7px;height:7px;border-radius:1px 3px 1px 1px;background:#9ccc3f;transform:skewY(-8deg)"></div>
<div style="left:15px;top:17px;width:7px;height:7px;border-radius:1px 1px 1px 3px;background:#3fa9f5;transform:skewY(-8deg)"></div>
<div style="left:23px;top:16px;width:7px;height:7px;border-radius:1px 1px 3px 1px;background:#fbc62d;transform:skewY(-8deg)"></div>
<div class="tbtn" style="left:49px;width:48px;background:linear-gradient(rgba(205,208,212,.6),rgba(165,169,175,.42) 50%,rgba(148,152,158,.45));"></div>
<div class="tbtn" style="left:254px;width:48px;"></div>
<div class="tbtn" style="left:304.5px;width:42.5px;background:linear-gradient(rgba(235,238,242,.8),rgba(205,209,215,.62) 50%,rgba(180,185,193,.62));"></div>
<div class="tbtn" style="left:355px;width:49px;"></div>
<div class="tbtn" style="left:406px;width:49px;"></div>
<div class="tbtn" style="left:457.5px;width:49px;"></div>
<div class="tbtn" style="left:347px;width:4.5px;border-left:none"></div>
<svg style="left:60px;top:4px" width="27" height="25" viewBox="0 0 27 25"><path d="M1 2.5 H10 L12 5 H26 V20 H1 Z" fill="#f1d680" stroke="#d2b45a" stroke-width=".8"/><rect x="1" y="7" width="25" height="14" fill="#f9e9a8" stroke="#dcc06a" stroke-width=".6"/><rect x="3" y="2" width="3" height="2.2" fill="#4aa52c"/><rect x="9" y="4" width="3" height="2.2" fill="#d9534f"/><rect x="15" y="5.2" width="4" height="3" fill="#8dbbe8"/><rect x="18" y="4.5" width="7" height="3.5" fill="#fbf5d0"/><path d="M4 24.5 V14 H23 V24.5 H19 V18 H8 V24.5 Z" fill="#8fcaf0" stroke="#58a2d8" stroke-width=".8"/><path d="M4.5 14.5 H22.5 V16.5 H4.5Z" fill="#c6e6fa"/></svg>
<div style="left:112px;top:4px;width:24px;height:24px;border-radius:12px;background:conic-gradient(from 58deg,#f7cb2a 0 120deg,#3bb44a 120deg 242deg,#dc3b2e 242deg 360deg);box-shadow:0 0 1px #444"></div>
<div style="left:118.5px;top:10.5px;width:11px;height:11px;border-radius:6px;background:#f3f3f3"></div>
<div style="left:120px;top:12px;width:8px;height:8px;border-radius:4px;background:radial-gradient(circle at 45% 35%,#6ea6f5,#2f6fd6)"></div>
<div style="left:162px;top:2.5px;width:27px;height:26.5px;background:#050505"></div>
<svg style="left:162px;top:2.5px" width="27" height="27" viewBox="0 0 27 27"><path d="M0.5 8.5 C5 8.5 9.5 10.5 13.5 14 C17.5 10.5 22 8.5 26.5 8.5 C22 10.5 18.5 15 16 21.5 L13.5 25 L11 21.5 C8.5 15 5 10.5 0.5 8.5 Z" fill="#e2e2e2"/><path d="M13.5 12.5 C15 14.5 15 17.5 13.5 20 C12 17.5 12 14.5 13.5 12.5Z" fill="#050505"/></svg>
<div style="left:219px;top:2.5px;width:17px;height:18px;border-radius:3px;background:linear-gradient(#e66050,#bb2a1c)"></div>
<div style="left:232px;top:9px;width:8px;height:16px;background:#ececec;border-radius:1px"></div>
<div style="left:213px;top:11px;width:17.5px;height:17.5px;border-radius:3px;background:linear-gradient(#4a90de,#1f5fb0)"></div>
<svg style="left:214px;top:12px" width="16" height="16" viewBox="0 0 16 16"><circle cx="3" cy="13" r="1.9" fill="#fff"/><path d="M1.2 7.2 A7.6 7.6 0 0 1 8.8 14.8" fill="none" stroke="#fff" stroke-width="2.2"/><path d="M1.2 2.4 A12.4 12.4 0 0 1 13.6 14.8" fill="none" stroke="#fff" stroke-width="2.2"/></svg>
<svg style="left:264px;top:3px" width="27" height="27" viewBox="0 0 27 27"><defs><linearGradient id="gat" x1="0" y1="0" x2="0" y2="1"><stop offset="0" stop-color="#f6a24a"/><stop offset="1" stop-color="#e2602a"/></linearGradient></defs><circle cx="13" cy="13" r="5" fill="none" stroke="url(#gat)" stroke-width="3.2"/><path d="M18 8 V15.5 C18 19 23.5 18.5 23.5 13 C23.5 6.5 18.5 2.5 13 2.5 C7 2.5 2.5 7 2.5 13 C2.5 19.5 7 23.8 13 23.8 C16 23.8 18.5 23 20.5 21.5" fill="none" stroke="url(#gat)" stroke-width="3.2" stroke-linecap="round"/></svg>
<div style="left:317px;top:3px;width:19px;height:25px;background:linear-gradient(135deg,#ffffff,#dfe6f2);border:1px solid #93a2bd;border-radius:2px;transform:skewY(-5deg)"></div>
<div style="left:326px;top:9.0px;width:8px;height:1.6px;background:#4f6fb2;transform:skewY(-5deg)"></div>
<div style="left:326px;top:12.4px;width:8px;height:1.6px;background:#4f6fb2;transform:skewY(-5deg)"></div>
<div style="left:326px;top:15.8px;width:8px;height:1.6px;background:#4f6fb2;transform:skewY(-5deg)"></div>
<div style="left:326px;top:19.2px;width:8px;height:1.6px;background:#4f6fb2;transform:skewY(-5deg)"></div>
<div style="left:326px;top:22.6px;width:8px;height:1.6px;background:#4f6fb2;transform:skewY(-5deg)"></div>
<div style="left:312px;top:7px;width:15px;height:15px;background:linear-gradient(#5a86d2,#1d4696);border:1px solid #cfdaf0;border-radius:2px;transform:skewY(4deg)"></div>
<div class="t" style="left:312px;top:8px;width:15px;text-align:center;color:#fff;font-weight:bold;font-size:10.5px;line-height:13px;transform:skewY(4deg)">W</div>
<div style="left:372px;top:5px;width:18px;height:22px;background:linear-gradient(#c6e4f5,#86bde3);border:1px solid #73a9d2"></div>
<div style="left:367.5px;top:6.5px;width:19px;height:19px;border-radius:10px;background:radial-gradient(circle at 50% 35%,#ffb65a,#ea7412);border:1px solid #f9dcb8"></div>
<div style="left:374.5px;top:11.5px;width:0;height:0;border-top:4.5px solid transparent;border-bottom:4.5px solid transparent;border-left:7px solid #fff"></div>
<svg style="left:418px;top:3px" width="26" height="26" viewBox="0 0 32 32"><path d="M3 7 L18 3 L29 9 L14 13 Z" fill="#2f9fd8" stroke="#1b4f7a" stroke-width=".8"/><path d="M5 4 L20 1 L30 6" fill="none" stroke="#222" stroke-width="2.2"/><path d="M1 17 L16 14 L28 18 V23 L13 27 L1 22 Z" fill="#f3e27a" stroke="#8a7a2a" stroke-width=".8"/><path d="M16 14 L28 18 L29.5 10 L27 9" fill="#9aa34a" stroke="#5a6a2a" stroke-width=".6"/><rect x="18" y="16" width="12" height="15" fill="#f5f8fc" stroke="#2a4f8a"/><rect x="20" y="18" width="4.5" height="5.5" fill="#3a6fb8"/><path d="M20 26 H28 M20 28.5 H28" stroke="#3a6fb8"/></svg>
<svg style="left:469px;top:2px" width="26" height="29" viewBox="0 0 26 29"><path d="M1 1 H8 V11 L15 1 H24 L14 14 L24 28 H15 L8 18 V28 H1 Z" fill="#e5262c"/><path d="M1 1 H8 V11 L15 1 H24 L17.5 9.5 H1 Z" fill="#f8b5b2" opacity=".6"/><path d="M16 10 L25 2.5 V25 L16 18 Z" fill="#f4f4f4"/><rect x="16.5" y="21" width="9" height="7" fill="#111"/><path d="M13 17 L19 23 L15.5 23.5 Z" fill="#111"/></svg>
<div class="tray" style="left:1185px;top:8px;width:18px;font-size:9px;color:#e8e8e8">RU</div>
<div style="left:1213px;top:15.5px;width:0;height:0;border-left:3.5px solid transparent;border-right:3.5px solid transparent;border-bottom:4px solid #f0f0f0"></div>
<svg style="left:1230px;top:9px" width="14" height="15" viewBox="0 0 17 18"><path d="M2 2 C0 6 0 9 2 12 M15 2 C17 6 17 9 15 12" fill="none" stroke="#c9d3c0" stroke-width="1.2"/><path d="M5.5 1 H11.5 V8 H15 L8.5 16 L2 8 H5.5 Z" fill="#7ed321" stroke="#3f8a0f" stroke-width=".8"/></svg>
<svg style="left:1250px;top:11px" width="13" height="12" viewBox="0 0 16 15"><path d="M1 5 H4 L8 1 V14 L4 10 H1 Z" fill="#f4f4f4" stroke="#9a9a9a" stroke-width=".5"/><path d="M10 4.5 C11.5 6 11.5 9 10 10.5 M12 2.5 C14.5 5 14.5 10 12 12.5" fill="none" stroke="#e6e6e6" stroke-width="1.1"/></svg>
<div style="left:1270px;top:10.5px;width:13px;height:13px;border-radius:7px;background:#e0343a;border:1px solid #f08a8a"></div><div style="left:1272.5px;top:13px;width:8px;height:8px;border-radius:4px;border:1.2px solid #fbdcdc"></div><div style="left:1275px;top:15.5px;width:3px;height:3px;border-radius:2px;background:#fbdcdc"></div>
<div style="left:1291px;top:10px;width:6px;height:6px;background:#f0f0f0;border:1px solid #666"></div><div style="left:1294px;top:12px;width:10px;height:8px;background:#c9ccd4;border:1px solid #555"></div><div style="left:1296px;top:16px;width:8px;height:7px;background:#d8252b"></div>
<div class="tray" style="left:1312px;top:4px;width:56px;font-size:9px">21:44</div>
<div class="tray" style="left:1312px;top:18px;width:56px;font-size:9px">07.09.2011</div>
<div style="left:1372px;top:1px;width:12px;height:32px;border:1px solid rgba(20,22,28,.9);background:linear-gradient(90deg,rgba(150,156,166,.65),rgba(90,96,106,.5));box-shadow:inset 1px 1px 0 rgba(255,255,255,.25)"></div>
</div>
</div></body></html>
